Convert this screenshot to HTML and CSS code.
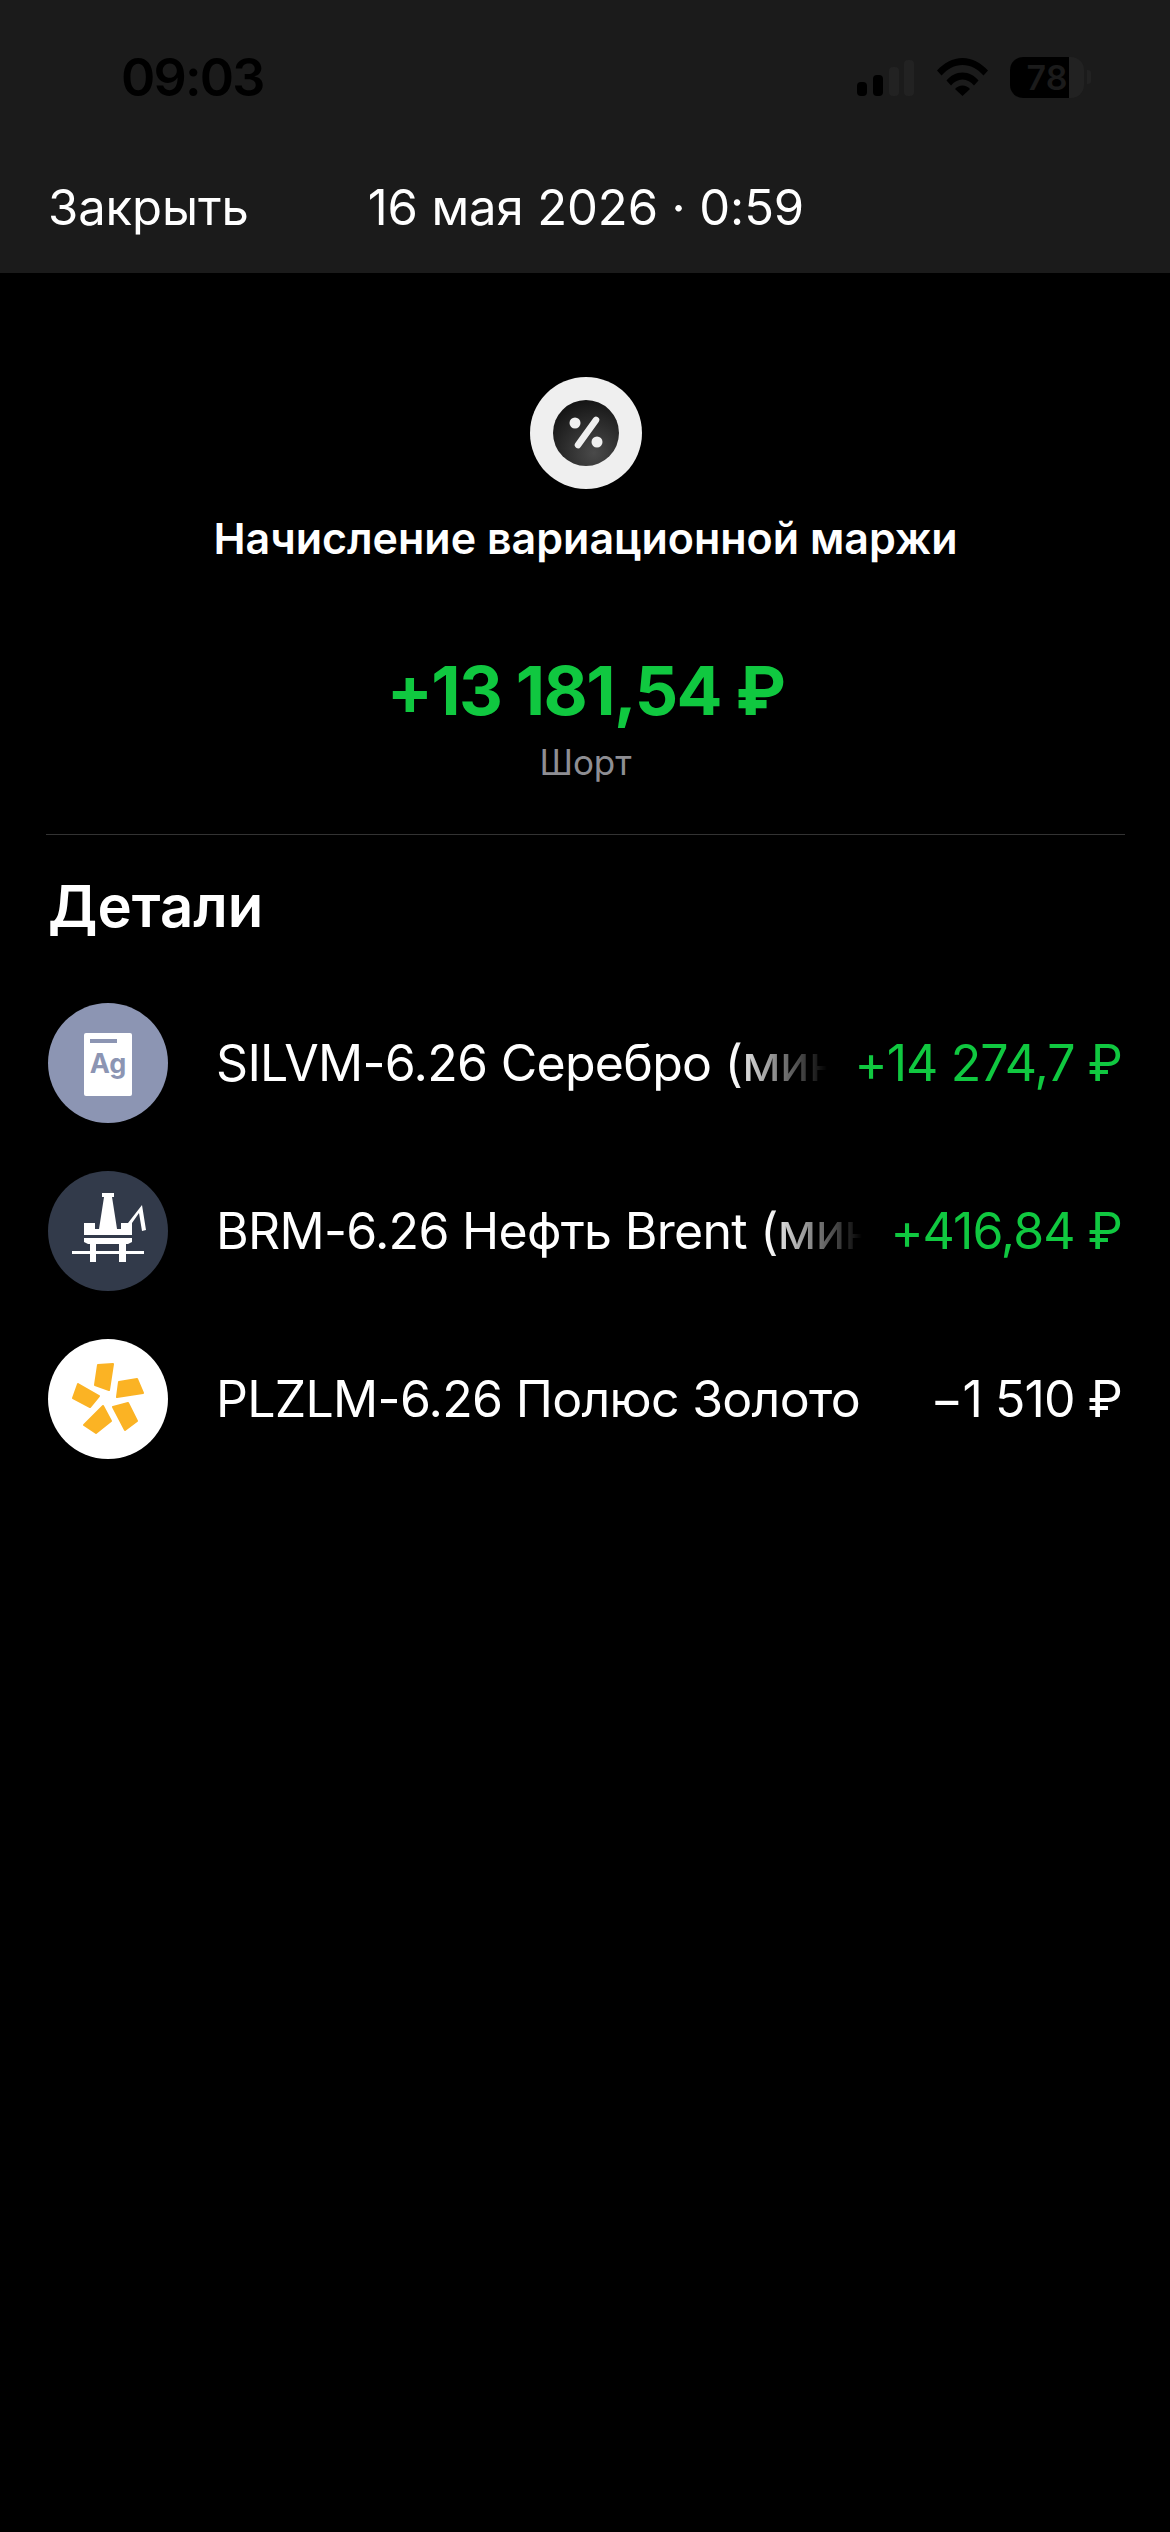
FILE: index.html
```html
<!DOCTYPE html>
<html lang="ru">
  <head>
    <meta charset="UTF-8" />
    <meta name="viewport" content="width=device-width, initial-scale=1.0" />
    <title>Детали операции</title>
    <link rel="stylesheet" href="styles.css">
  </head>

  <body>
    <header class="top">
      <div class="status">
        <span class="clock">09:03</span>
        <div class="status-icons">
          <svg class="signal" width="57" height="38" viewBox="0 0 57 38">
            <rect x="0" y="24" width="10" height="14" rx="4" fill="#000" />
            <rect x="16" y="17" width="10" height="21" rx="4" fill="#000" />
            <rect x="32" y="9" width="10" height="29" rx="4" fill="#222" />
            <rect x="47" y="2" width="10" height="36" rx="4" fill="#222" />
          </svg>
          <svg class="wifi" width="51" height="38" viewBox="0 0 51 38">
            <path d="M0 12.5C7 5 15.5 0 25.500 0S44 5 51 12.500L46.500 17.500C40.500 11 33.500 7 25.500 7S10.500 11 4.500 17.500Z" fill="#000" />
            <path d="M9.500 22.500C13.500 17.500 19 14.500 25.500 14.500S37.500 17.500 41.500 22.500L37 27.500C34 24 30 21.500 25.500 21.500S17 24 14 27.500Z" fill="#000" />
            <path d="M18 31C20 29 22.500 27.500 25.500 27.500S31 29 33 31L25.500 38Z" fill="#000" />
          </svg>
          <div class="battery">
            <div class="battery-body">
              <div class="battery-level"></div>
              <span class="battery-text">78</span>
            </div>
            <div class="battery-cap"></div>
          </div>
        </div>
      </div>
      <nav class="nav">
        <span class="nav-close">Закрыть</span>
        <span class="nav-date">16 мая 2026 · 0:59</span>
      </nav>
    </header>

    <main>
      <section class="summary">
        <div class="op-icon">
          <svg width="66" height="66" viewBox="0 0 66 66">
            <defs>
              <radialGradient id="opfill" cx="0.62" cy="0.8" r="0.8">
                <stop offset="0" stop-color="#4a4a4a" />
                <stop offset="1" stop-color="#151515" />
              </radialGradient>
            </defs>
            <circle cx="33" cy="33" r="33" fill="url(#opfill)" />
            <circle cx="22" cy="23" r="5.500" fill="#efefef" />
            <circle cx="44" cy="42" r="5.500" fill="#efefef" />
            <path d="M43 20L25 45" stroke="#efefef" stroke-width="6.500" stroke-linecap="round" />
          </svg>
        </div>
        <h1 class="op-title">Начисление вариационной маржи</h1>
        <div class="op-amount">+13 181,54 ₽</div>
        <div class="op-note">Шорт</div>
      </section>

      <section class="details">
        <h2 class="details-title">Детали</h2>
        <ul class="rows">
          <li class="row">
            <svg class="logo" width="120" height="120" viewBox="0 0 120 120">
              <circle cx="60" cy="60" r="60" fill="#8c95b3" />
              <rect x="36" y="30" width="48" height="63" rx="2" fill="#fff" />
              <rect x="42" y="36" width="27" height="4" fill="#8c95b3" />
              <text x="60" y="70" class="logo-text" text-anchor="middle">Ag</text>
            </svg>
            <span class="row-name row-name-cut">SILVM-6.26 Серебро (мини)</span>
            <span class="row-sum plus">+14 274,7 ₽</span>
          </li>
          <li class="row">
            <svg class="logo" width="120" height="120" viewBox="0 0 120 120">
              <circle cx="60" cy="60" r="60" fill="#323a4a" />
              <g fill="#fff">
                <rect x="54" y="22" width="12" height="4" />
                <path d="M56 26H64L69 58H51Z" />
                <path d="M36 52H47V58H73V52H80L94 34 98 59 94 60 91 42 84 52H84V64H36Z" />
                <path d="M36 67H84V71L80 73H40L36 71Z" />
                <rect x="42" y="73" width="6" height="18" />
                <rect x="71" y="73" width="7" height="18" />
                <rect x="24" y="80" width="72" height="3" />
              </g>
            </svg>
            <span class="row-name row-name-cut">BRM-6.26 Нефть Brent (мини)</span>
            <span class="row-sum plus">+416,84 ₽</span>
          </li>
          <li class="row">
            <svg class="logo" width="120" height="120" viewBox="0 0 120 120">
              <circle cx="60" cy="60" r="60" fill="#fff" />
              <g fill="#fbb324" stroke="#fbb324" stroke-width="2" stroke-linejoin="round">
                <path d="M50 26L65 25 61 51 47 46Z" />
                <path d="M71 43L89 40 95 54 69 58Z" />
                <path d="M65 68L80 64 89 82 77 91Z" />
                <path d="M55 67L63 82 48 94 36 86Z" />
                <path d="M30 45L51 57 42 68 25 59Z" />
              </g>
            </svg>
            <span class="row-name">PLZLM-6.26 Полюс Золото</span>
            <span class="row-sum">−1 510 ₽</span>
          </li>
        </ul>
      </section>
    </main>
  </body>
</html>
```

FILE: styles.css
```css
html {
  background-color: #000;
}
body {
  margin: 0;
  min-height: 2532px;
  color: #fff;
  font-family: Inter, "Noto Sans", sans-serif;
}
.top {
  height: 273px;
  background: #1b1b1b;
}
.status {
  display: flex;
  align-items: center;
  justify-content: space-between;
  height: 154px;
  padding: 0 79px 0 121px;
}
.clock {
  color: #000;
  font-size: 52px;
  font-weight: 600;
  letter-spacing: -1.8px;
}
.status-icons {
  display: flex;
  align-items: center;
}
.signal {
  margin-right: 23px;
}
.wifi {
  margin-right: 22px;
}
.battery {
  display: flex;
  align-items: center;
  gap: 3px;
}
.battery-body {
  position: relative;
  display: flex;
  align-items: center;
  justify-content: center;
  width: 74px;
  height: 41px;
  overflow: hidden;
  border-radius: 13px;
  background: #222;
}
.battery-level {
  position: absolute;
  inset: 0 15px 0 0;
  background: #000;
}
.battery-text {
  position: relative;
  color: #1b1b1b;
  font-size: 34px;
  font-weight: 600;
}
.battery-cap {
  width: 4px;
  height: 14px;
  border-radius: 0 3px 3px 0;
  background: #222;
}
.nav {
  display: flex;
  align-items: center;
  gap: 119px;
  padding: 24px 48px 0;
  font-size: 49px;
  letter-spacing: -0.1px;
}

.summary {
  display: flex;
  flex-direction: column;
  align-items: center;
  height: 457px;
  margin: 0 45px 0 46px;
  padding-top: 104px;
  border-bottom: 1px solid #333;
}
.op-icon {
  display: flex;
  align-items: center;
  justify-content: center;
  width: 112px;
  height: 112px;
  border-radius: 50%;
  background: #efefef;
}
.op-title {
  margin: 24px 0 0;
  font-size: 43px;
  font-weight: 600;
  line-height: 50px;
  white-space: nowrap;
}
.op-amount {
  margin-top: 87px;
  color: #10c840;
  font-size: 68px;
  font-weight: 700;
  letter-spacing: -1.6px;
  line-height: 80px;
}
.op-note {
  margin-top: 11px;
  color: #8e8e93;
  font-size: 35px;
  line-height: 42px;
}

.details {
  padding: 36px 48px 0 48px;
}
.details-title {
  margin: 0;
  font-size: 58px;
  font-weight: 600;
  line-height: 70px;
}
.rows {
  display: flex;
  flex-direction: column;
  gap: 48px;
  margin: 62px 0 0;
  padding: 0;
  list-style: none;
}
.row {
  display: flex;
  align-items: center;
  gap: 28px;
  height: 120px;
}
.logo {
  flex: none;
  margin-right: 20px;
}
.logo-text {
  fill: #8c95b3;
  font-size: 27px;
  font-weight: 700;
}
.row-name {
  flex: 1;
  min-width: 0;
  overflow: hidden;
  font-size: 50px;
  letter-spacing: -0.7px;
  white-space: nowrap;
}
.row-name-cut {
  -webkit-mask-image: linear-gradient(to left, transparent, #000 95px);
  mask-image: linear-gradient(to left, transparent, #000 95px);
}
.row-sum {
  flex: none;
  font-size: 50px;
  letter-spacing: -0.9px;
  white-space: nowrap;
}
.plus {
  color: #10c840;
}
```
